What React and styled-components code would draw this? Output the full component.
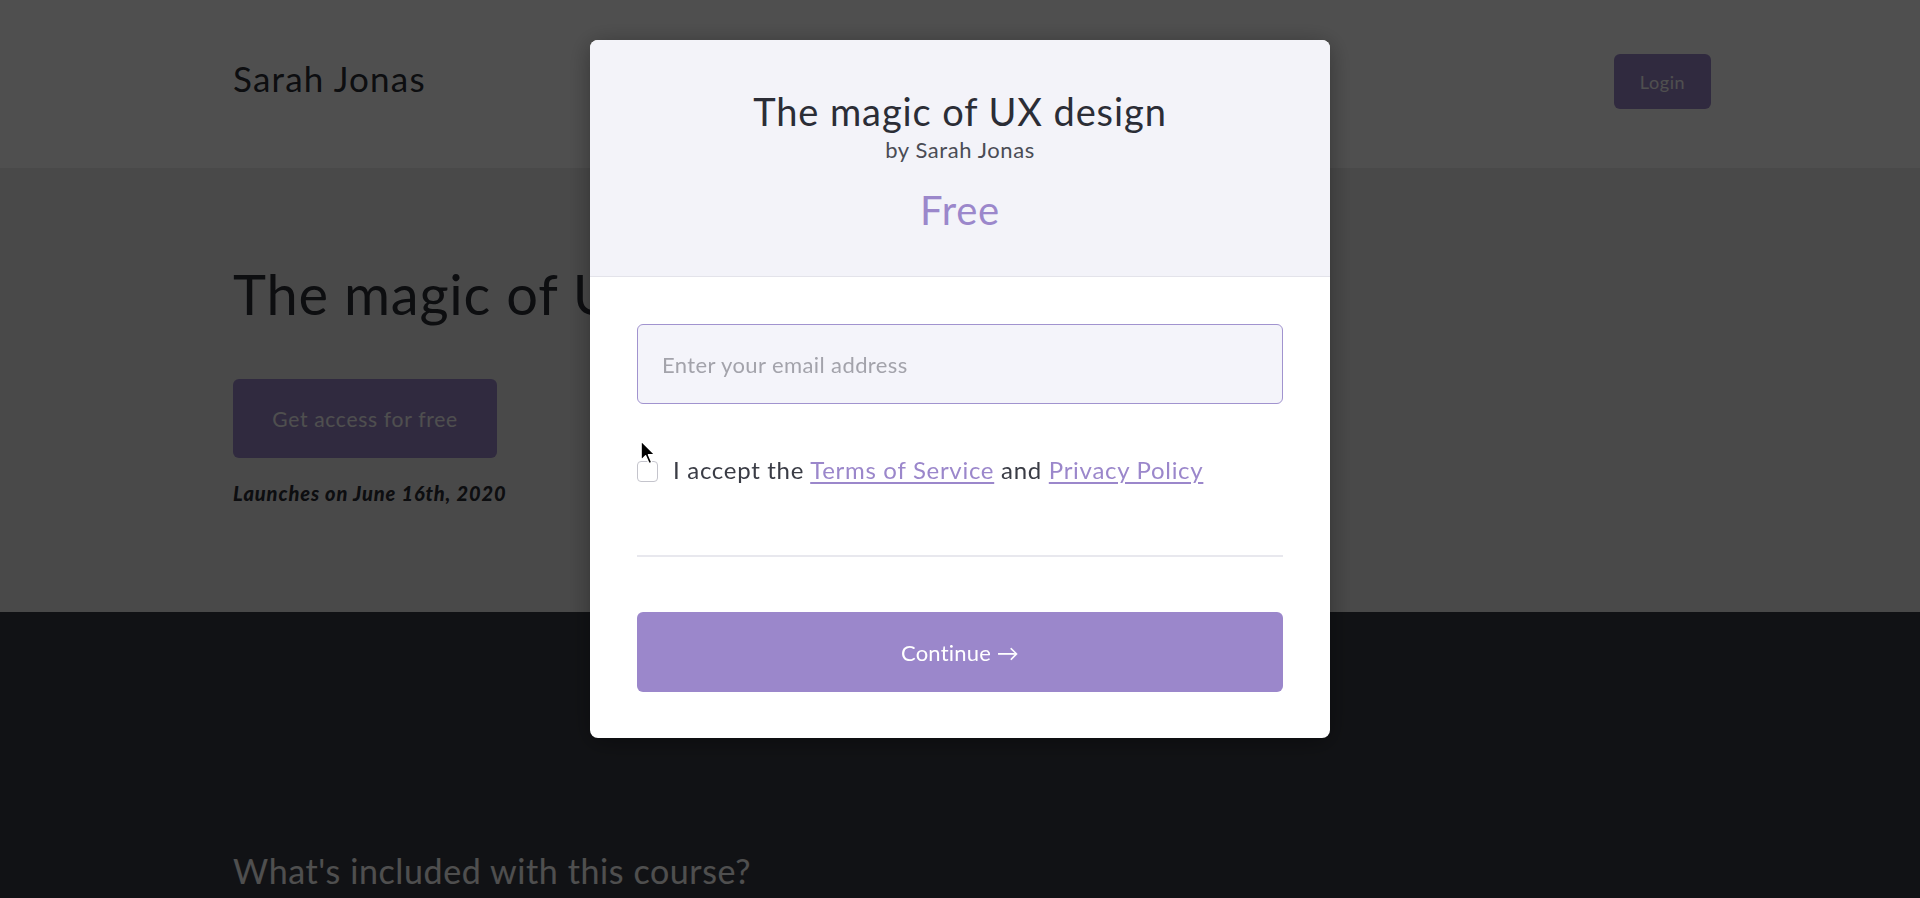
import React, { useState } from "react";
import styled, { createGlobalStyle } from "styled-components";

const GlobalStyle = createGlobalStyle`
  html, body {
    margin: 0;
    padding: 0;
    height: 100%;
    overflow: hidden;
    font-family: Lato, "Open Sans", "Liberation Sans", sans-serif;
  }
  * { box-sizing: border-box; }
`;

const purple = "#9b87cb";

const Page = styled.div`
  width: 100%;
  min-height: 898px;
  background: #ebebeb;
`;

const Nav = styled.header`
  height: 168px;
  background: #ffffff;
  display: flex;
  justify-content: space-between;
  align-items: flex-start;
  padding: 54px 209px 0 233px;
`;

const Brand = styled.div`
  font-size: 35px;
  color: #2b2d36;
  letter-spacing: 1.2px;
  line-height: 48px;
`;

const SmallButton = styled.button`
  width: 97px;
  height: 55px;
  border: none;
  border-radius: 6px;
  background: ${purple};
  color: #ffffff;
  font-family: inherit;
  font-size: 18px;
  letter-spacing: 0.6px;
`;

const Hero = styled.section`
  height: 444px;
  padding: 92px 233px 0;
  display: flex;
  flex-direction: column;
  align-items: flex-start;
`;

const HeroTitle = styled.h1`
  margin: 0;
  font-size: 56px;
  font-weight: 400;
  color: #2b2d36;
  line-height: 68px;
  letter-spacing: 0.8px;
`;

const BigButton = styled.button`
  margin-top: 51px;
  width: 264px;
  height: 79px;
  border: none;
  border-radius: 6px;
  background: ${purple};
  color: #ffffff;
  font-family: inherit;
  font-size: 21px;
  letter-spacing: 0.7px;
`;

const Launch = styled.p`
  margin: 23px 0 0;
  font-size: 20px;
  font-weight: 900;
  font-style: italic;
  color: #2b2d36;
  letter-spacing: 0.9px;
`;

const Dark = styled.section`
  height: 286px;
  background: #393c45;
  padding: 239px 233px 0;
`;

const SectionTitle = styled.h2`
  margin: 0;
  font-size: 34px;
  font-weight: 400;
  color: #ffffff;
  line-height: 40px;
  letter-spacing: 0.6px;
`;

const Overlay = styled.div`
  position: fixed;
  inset: 0;
  background: rgba(0, 0, 0, 0.69);
`;

const Modal = styled.div`
  position: fixed;
  top: 40px;
  left: 50%;
  transform: translateX(-50%);
  width: 740px;
  background: #ffffff;
  border-radius: 8px;
  overflow: hidden;
  box-shadow: 0 4px 24px rgba(0, 0, 0, 0.35);
`;

const ModalHeader = styled.div`
  background: #f3f3f9;
  border-bottom: 1px solid #e3e3ea;
  height: 237px;
  display: flex;
  flex-direction: column;
  align-items: center;
  padding-top: 48px;
`;

const ModalTitle = styled.h2`
  margin: 0;
  font-size: 38px;
  font-weight: 400;
  color: #2b2d36;
  line-height: 46px;
  letter-spacing: 0.9px;
`;

const ByLine = styled.div`
  font-size: 22px;
  color: #4a4c55;
  line-height: 26px;
  margin-top: 3px;
  letter-spacing: 0.6px;
`;

const Price = styled.div`
  margin-top: 24px;
  font-size: 40px;
  color: ${purple};
  line-height: 46px;
  letter-spacing: 0.8px;
`;

const ModalBody = styled.form`
  position: relative;
  padding: 47px 47px 46px;
  display: flex;
  flex-direction: column;
`;

const EmailInput = styled.input`
  width: 100%;
  height: 80px;
  border: 1.5px solid #a193cf;
  border-radius: 6px;
  background: #f4f4fa;
  padding: 0 24px;
  font-family: inherit;
  font-size: 22px;
  letter-spacing: 0.4px;
  color: #2b2d36;
  outline: none;
  caret-color: #2b2d36;
  &::placeholder {
    color: #a3a3ab;
  }
`;

const CheckRow = styled.label`
  margin-top: 52px;
  display: flex;
  align-items: center;
  gap: 15px;
  font-size: 24px;
  letter-spacing: 0.7px;
  color: #3a3c45;
  line-height: 28px;
`;

const Box = styled.span`
  width: 21px;
  height: 21px;
  border: 1.5px solid #c4c4cc;
  border-radius: 4px;
  background: #fff;
  flex-shrink: 0;
  margin-top: 2px;
`;

const Link = styled.a`
  color: ${purple};
  text-decoration: underline;
  text-underline-offset: 3px;
  text-decoration-thickness: 1.5px;
`;

const Divider = styled.hr`
  margin: 71px 0 0;
  border: none;
  border-top: 2px solid #e8e8ee;
`;

const ContinueButton = styled.button`
  margin-top: 55px;
  width: 100%;
  height: 80px;
  border: none;
  border-radius: 6px;
  background: ${purple};
  color: #ffffff;
  font-family: inherit;
  font-size: 22px;
  letter-spacing: 0.2px;
`;

const Cursor = styled.svg`
  position: absolute;
  left: 50px;
  top: 163px;
  width: 18px;
  height: 27px;
  pointer-events: none;
`;

export default function App() {
  const [email, setEmail] = useState("");

  return (
    <>
      <GlobalStyle />
      <Page>
        <Nav>
          <Brand>Sarah Jonas</Brand>
          <SmallButton>Login</SmallButton>
        </Nav>
        <Hero>
          <HeroTitle>The magic of UX design</HeroTitle>
          <BigButton>Get access for free</BigButton>
          <Launch>Launches on June 16th, 2020</Launch>
        </Hero>
        <Dark>
          <SectionTitle>What's included with this course?</SectionTitle>
        </Dark>
      </Page>
      <Overlay />
      <Modal>
        <ModalHeader>
          <ModalTitle>The magic of UX design</ModalTitle>
          <ByLine>by Sarah Jonas</ByLine>
          <Price>Free</Price>
        </ModalHeader>
        <ModalBody onSubmit={(e) => e.preventDefault()}>
          <EmailInput
            autoFocus
            type="email"
            placeholder="Enter your email address"
            value={email}
            onChange={(e) => setEmail(e.target.value)}
          />
          <CheckRow>
            <Box />
            <span>
              I accept the <Link href="#">Terms of Service</Link> and{" "}
              <Link href="#">Privacy Policy</Link>
            </span>
          </CheckRow>
          <Divider />
          <ContinueButton type="submit">Continue →</ContinueButton>
          <Cursor viewBox="0 0 16 24">
            <path
              d="M1 1 L1 18 L5 14 L8 21 L10.5 20 L7.5 13 L13 13 Z"
              fill="#000"
              stroke="#fff"
              strokeWidth="1.2"
              strokeLinejoin="round"
            />
          </Cursor>
        </ModalBody>
      </Modal>
    </>
  );
}
